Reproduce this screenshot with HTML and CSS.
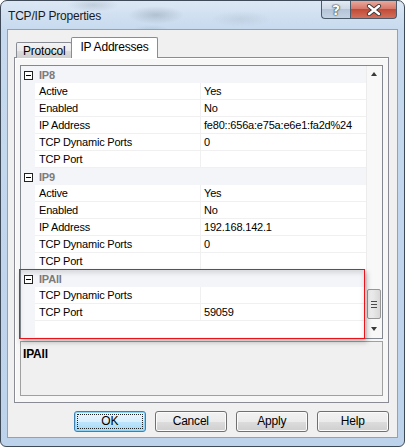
FILE: index.html
```html
<!DOCTYPE html>
<html lang="en">
<head>
    <meta charset="UTF-8">
    <title>TCP/IP Properties</title>
    <link rel="stylesheet" href="styles.css">
</head>
<body>
    <div class="window">
        <div class="titlebar">
            <span class="title">TCP/IP Properties</span>
            <div class="caption-buttons">
                <div class="cap-btn help">?</div>
                <div class="cap-btn close">
                    <svg width="16" height="12" viewBox="0 0 16 12">
                        <path d="M3 2 L13 10 M13 2 L3 10" stroke="#3b3b3b" stroke-width="4.2" stroke-linecap="round"/>
                        <path d="M3 2 L13 10 M13 2 L3 10" stroke="#fff" stroke-width="2.4" stroke-linecap="round"/>
                    </svg>
                </div>
            </div>
        </div>

        <div class="client">
            <div class="tabs">
                <div class="tab">Protocol</div>
                <div class="tab active">IP Addresses</div>
            </div>

            <div class="tab-panel">
                <div class="propgrid">
                    <div class="grid-body">
                        <div class="rows">
                            <div class="row category"><span class="gutter"><i class="minus"></i></span><span class="cat-name">IP8</span></div>
                            <div class="row"><span class="gutter"></span><span class="name">Active</span><span class="value">Yes</span></div>
                            <div class="row"><span class="gutter"></span><span class="name">Enabled</span><span class="value">No</span></div>
                            <div class="row"><span class="gutter"></span><span class="name">IP Address</span><span class="value">fe80::656a:e75a:e6e1:fa2d%24</span></div>
                            <div class="row"><span class="gutter"></span><span class="name">TCP Dynamic Ports</span><span class="value">0</span></div>
                            <div class="row"><span class="gutter"></span><span class="name">TCP Port</span><span class="value"></span></div>

                            <div class="row category"><span class="gutter"><i class="minus"></i></span><span class="cat-name">IP9</span></div>
                            <div class="row"><span class="gutter"></span><span class="name">Active</span><span class="value">Yes</span></div>
                            <div class="row"><span class="gutter"></span><span class="name">Enabled</span><span class="value">No</span></div>
                            <div class="row"><span class="gutter"></span><span class="name">IP Address</span><span class="value">192.168.142.1</span></div>
                            <div class="row"><span class="gutter"></span><span class="name">TCP Dynamic Ports</span><span class="value">0</span></div>
                            <div class="row"><span class="gutter"></span><span class="name">TCP Port</span><span class="value"></span></div>

                            <div class="row category"><span class="gutter"><i class="minus"></i></span><span class="cat-name">IPAll</span></div>
                            <div class="row"><span class="gutter"></span><span class="name">TCP Dynamic Ports</span><span class="value"></span></div>
                            <div class="row"><span class="gutter"></span><span class="name">TCP Port</span><span class="value">59059</span></div>
                            <div class="row filler"><span class="gutter"></span><span class="name"></span><span class="value"></span></div>
                        </div>
                        <div class="scrollbar">
                            <div class="arrow up"></div>
                            <div class="track">
                                <div class="thumb"><i></i><i></i><i></i></div>
                            </div>
                            <div class="arrow down"></div>
                        </div>
                    </div>
                    <!-- marks the IPAll section -->
                    <div class="highlight"></div>
                </div>
                <div class="description"><b>IPAll</b></div>
            </div>

            <div class="buttons">
                <button class="btn default"><span>OK</span></button>
                <button class="btn"><span>Cancel</span></button>
                <button class="btn"><span>Apply</span></button>
                <button class="btn"><span>Help</span></button>
            </div>
        </div>
    </div>
</body>
</html>
```

FILE: styles.css
```css
* {
    margin: 0;
    padding: 0;
    box-sizing: border-box;
}

body {
    width: 405px;
    height: 447px;
    background: #fff;
    font-family: 'Liberation Sans', 'DejaVu Sans', sans-serif;
    font-size: 11px;
    color: #000;
}

.window {
    width: 405px;
    height: 447px;
    border: 1px solid #3e4a57;
    border-radius: 7px 7px 6px 6px;
    padding: 0 6px 8px;
    display: flex;
    flex-direction: column;
    background:
        radial-gradient(ellipse 28px 9px at 155px 14px, rgba(120,135,150,0.35), transparent),
        radial-gradient(ellipse 26px 7px at 92px 4px, rgba(120,135,150,0.25), transparent),
        radial-gradient(ellipse 20px 6px at 150px 30px, rgba(120,135,150,0.2), transparent),
        radial-gradient(ellipse 30px 8px at 240px 18px, rgba(120,135,150,0.15), transparent),
        linear-gradient(to bottom, #dbe7f4 0, #c6d9ee 30px, #bdd3ec 100%);
    overflow: hidden;
}

.titlebar {
    height: 28px;
    display: flex;
    justify-content: space-between;
    align-items: flex-start;
}

.title {
    margin: 8px 0 0 1px;
    font-size: 12px;
    color: #1a1a1a;
    letter-spacing: -0.2px;
}

.caption-buttons {
    display: flex;
    margin-right: 1px;
}

.cap-btn {
    height: 18px;
    border: 1px solid #4c5968;
    border-top: none;
    display: flex;
    align-items: center;
    justify-content: center;
}

.help {
    width: 29px;
    border-radius: 0 0 0 4px;
    border-right: none;
    background: linear-gradient(to bottom, #e3eaf2 0, #cdd9e6 45%, #b5c5d7 50%, #c3d3e4 100%);
    font: bold 14px 'DejaVu Sans', sans-serif;
    color: #fff;
    text-shadow: 0 0 1px #333, 0 0 1px #333, 0 0 2px #555;
}

.close {
    width: 47px;
    border-radius: 0 0 4px 0;
    background: linear-gradient(to bottom, #e9a99c 0, #d7786a 45%, #c24b36 50%, #d2705c 100%);
}

.client {
    flex: 1;
    border: 1px solid #8da2bd;
    background: #f0f0f0;
    padding: 7px 8px 0 0;
    display: flex;
    flex-direction: column;
}

/* tabs */
.tabs {
    display: flex;
    align-items: flex-end;
    margin-left: 8px;
    margin-bottom: -1px;
    position: relative;
    z-index: 1;
    height: 21px;
}

.tab {
    height: 16px;
    padding: 0 6px;
    border: 1px solid #898c95;
    border-bottom: none;
    border-radius: 2px 2px 0 0;
    background: linear-gradient(to bottom, #f3f3f3 0, #ebebeb 50%, #dddddd 51%, #cfcfcf 100%);
    font-size: 12px;
    line-height: 16px;
    letter-spacing: -0.2px;
}

.tab.active {
    height: 21px;
    margin-left: -1px;
    padding: 0 8px;
    background: #fff;
    line-height: 19px;
}

.tab-panel {
    margin-left: 6px;
    width: 375px;
    height: 346px;
    border: 1px solid #898c95;
    box-shadow: inset 1px 1px 0 #fff;
    background: #f7f7f7;
    padding: 7px 5px 0;
}

/* property grid */
.propgrid {
    position: relative;
    width: 363px;
    height: 274px;
    border: 1px solid #828790;
    background: #fff;
}

.grid-body {
    display: flex;
    height: 100%;
}

.rows {
    width: 345px;
    background: #f3f5f9;
}

.row {
    display: grid;
    grid-template-columns: 14px 165px 166px;
    height: 17px;
    line-height: 17px;
    letter-spacing: -0.2px;
}

.gutter {
    background: #f3f5f9;
}

.name,
.value {
    background: #fff;
    border-bottom: 1px solid #f0f0f0;
    white-space: nowrap;
    overflow: hidden;
}

.name {
    padding-left: 4px;
}

.value {
    padding-left: 3px;
    border-left: 1px solid #f0f0f0;
}

.row.filler {
    height: 16px;
}

.row.filler .name,
.row.filler .value {
    border: none;
}

.category {
    background: #f3f5f9;
}

.cat-name {
    grid-column: 2 / 4;
    padding-left: 4px;
    font-weight: bold;
    color: #7b7b7b;
    line-height: 18px;
}

.minus {
    display: block;
    position: relative;
    width: 9px;
    height: 9px;
    margin: 5px 0 0 3px;
    border: 1px solid #222;
    background: #fff;
}

.minus::after {
    content: '';
    position: absolute;
    left: 1px;
    top: 3px;
    width: 5px;
    height: 1px;
    background: #000;
}

/* scrollbar */
.scrollbar {
    width: 16px;
    display: flex;
    flex-direction: column;
    border-left: 1px solid #ececec;
    background: #f8f8f8;
}

.arrow {
    height: 17px;
    position: relative;
}

.arrow::after {
    content: '';
    position: absolute;
    left: 4px;
    border-left: 3.5px solid transparent;
    border-right: 3.5px solid transparent;
}

.arrow.up::after {
    top: 6px;
    border-bottom: 4px solid #3a3a3a;
}

.arrow.down::after {
    top: 6px;
    border-top: 4px solid #3a3a3a;
}

.track {
    flex: 1;
    display: flex;
    flex-direction: column;
    justify-content: flex-end;
}

.thumb {
    height: 30px;
    margin: 0 0 2px 0;
    width: 14px;
    border: 1px solid #979797;
    border-radius: 2px;
    background: linear-gradient(to right, #f3f3f3, #e6e6e6 50%, #d8d8d8);
    display: flex;
    flex-direction: column;
    align-items: center;
    justify-content: center;
    gap: 2px;
}

.thumb i {
    display: block;
    width: 6px;
    height: 1px;
    background: #4a4a4a;
}

.highlight {
    position: absolute;
    left: -2px;
    top: 203px;
    width: 346px;
    height: 70px;
    border: 1.5px solid #e8141b;
    box-shadow: 2px 3px 5px rgba(0, 0, 0, 0.25), inset 0 3px 5px rgba(0, 0, 0, 0.12);
}

.description {
    margin-top: 2px;
    height: 55px;
    border: 1px solid #a0a0a0;
    background: #f0f0f0;
    padding: 5px 2px;
    font-size: 12px;
    letter-spacing: -0.2px;
}

/* dialog buttons */
.buttons {
    display: flex;
    justify-content: flex-end;
    gap: 8.5px;
    margin-top: 8px;
}

.btn {
    width: 72.5px;
    height: 21px;
    border: 1px solid #707070;
    border-radius: 3px;
    background: linear-gradient(to bottom, #f2f2f2 0, #ebebeb 50%, #dddddd 51%, #cfcfcf 100%);
    box-shadow: inset 0 0 0 1px #fbfbfb;
    font-family: 'Liberation Sans', 'DejaVu Sans', sans-serif;
    font-size: 12px;
    color: #000;
    letter-spacing: -0.2px;
    padding: 2px;
}

.btn span {
    display: block;
    height: 100%;
    line-height: 13px;
    border: 1px dotted transparent;
}

.btn.default {
    border-color: #3c7fb1;
    background: linear-gradient(to bottom, #eaf6fd 0, #d9f0fc 50%, #bee6fd 51%, #a7d9f5 100%);
    box-shadow: inset 0 0 0 1px #8fd3f7;
}

.btn.default span {
    border-color: #222;
}
```
